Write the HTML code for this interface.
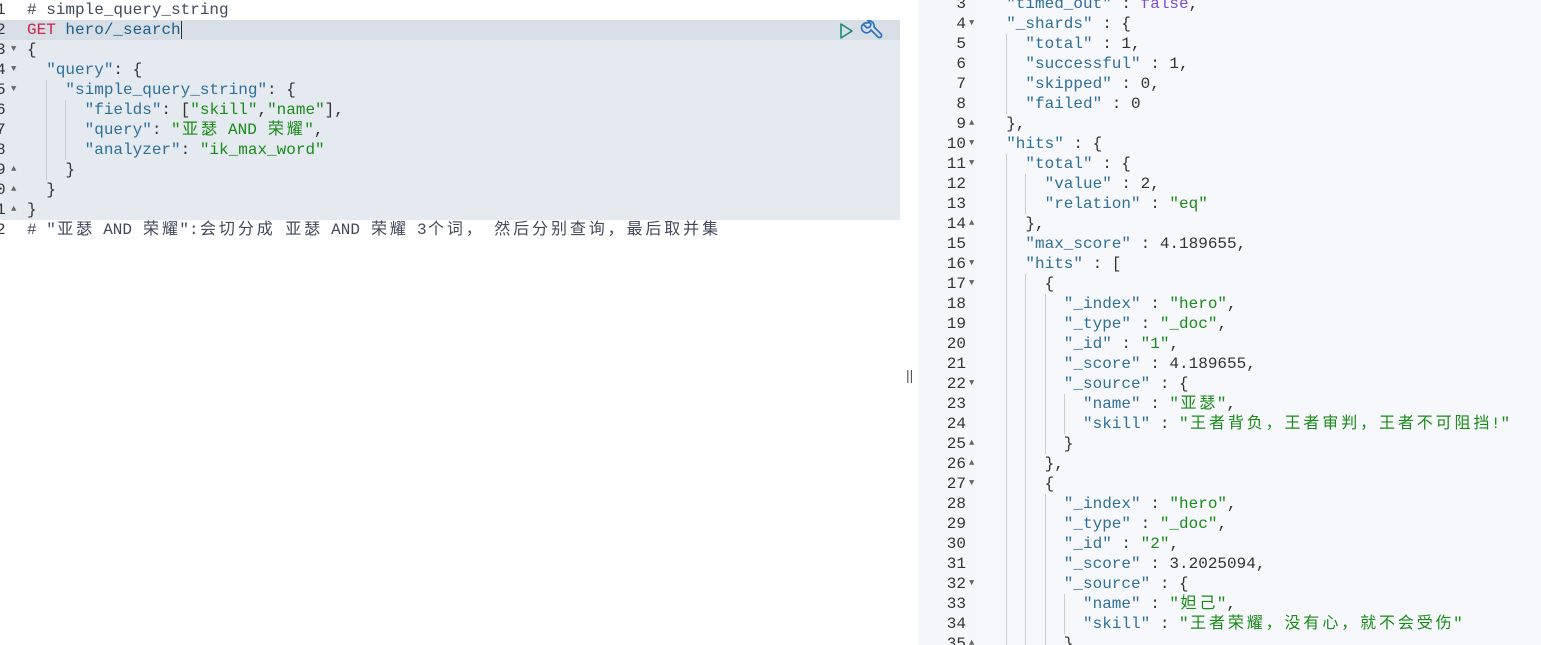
<!DOCTYPE html>
<html><head><meta charset="utf-8"><style>
html,body{margin:0;width:1541px;height:645px;overflow:hidden;}
body{background:#fff;position:relative;font-family:"Liberation Mono","Noto Sans CJK SC",monospace;font-size:16px;}
.l{position:absolute;white-space:pre;line-height:20px;height:20px;color:#333;}
.k{color:#2f6f98}.s{color:#1a8a1a}.c{color:#41495a}.m{color:#c7254e}.b{color:#7a4fd4}.n{color:#1c5e8a}
.g{position:absolute;width:1px;background:#c8ccd4;}
.num{position:absolute;line-height:20px;color:#333;font-size:16px;}
.ar{position:absolute;font-size:9px;color:#666;}
.cj{display:inline-block;width:18.9px;text-align:center;}
</style></head><body>
<div style="position:absolute;left:0;top:20px;width:900px;height:200px;background:#e5e9f0"></div>
<div style="position:absolute;left:0;top:20px;width:900px;height:20px;background:#d8dee6"></div>
<div style="position:absolute;left:918px;top:0;width:623px;height:645px;background:#f5f7fa"></div>
<div style="position:absolute;left:980px;top:0;width:561px;height:645px;background:#f7f8fb"></div>
<div style="position:absolute;left:906px;top:367px;font-family:'Liberation Sans';font-size:14px;color:#555">||</div>

<div class="num" style="left:-4px;top:0">1</div>
<div class="num" style="left:-4px;top:20px">2</div>
<div class="num" style="left:-4px;top:40px">3</div><div class="ar" style="left:11px;top:44px">▼</div>
<div class="num" style="left:-4px;top:60px">4</div><div class="ar" style="left:11px;top:64px">▼</div>
<div class="num" style="left:-4px;top:80px">5</div><div class="ar" style="left:11px;top:84px">▼</div>
<div class="num" style="left:-4px;top:100px">6</div>
<div class="num" style="left:-4px;top:120px">7</div>
<div class="num" style="left:-4px;top:140px">8</div>
<div class="num" style="left:-4px;top:160px">9</div><div class="ar" style="left:11px;top:164px">▲</div>
<div class="num" style="left:-4px;top:180px">0</div><div class="ar" style="left:11px;top:184px">▲</div>
<div class="num" style="left:-4px;top:200px">1</div><div class="ar" style="left:11px;top:204px">▲</div>
<div class="num" style="left:-4px;top:220px">2</div>

<div class="g" style="left:46px;top:80px;height:100px"></div>
<div class="g" style="left:65px;top:100px;height:60px"></div>
<div class="l c" style="left:27px;top:0"># simple_query_string</div>
<div class="l" style="left:27px;top:20px"><span class="m">GET</span> <span class="n">hero/_search</span><span style="border-left:1px solid #333"></span></div>
<div class="l" style="left:27px;top:40px">{</div>
<div class="l" style="left:27px;top:60px">  <span class="k">"query"</span>: {</div>
<div class="l" style="left:27px;top:80px">    <span class="k">"simple_query_string"</span>: {</div>
<div class="l" style="left:27px;top:100px">      <span class="k">"fields"</span>: [<span class="s">"skill"</span>,<span class="s">"name"</span>],</div>
<div class="l" style="left:27px;top:120px">      <span class="k">"query"</span>: <span class="s">"亚瑟 AND 荣耀"</span>,</div>
<div class="l" style="left:27px;top:140px">      <span class="k">"analyzer"</span>: <span class="s">"ik_max_word"</span></div>
<div class="l" style="left:27px;top:160px">    }</div>
<div class="l" style="left:27px;top:180px">  }</div>
<div class="l" style="left:27px;top:200px">}</div>
<div class="l c" style="left:27px;top:220px"># "亚瑟 AND 荣耀":会切分成 亚瑟 AND 荣耀 3个词， 然后分别查询，最后取并集</div>

<svg style="position:absolute;left:838px;top:20px" width="46" height="22" viewBox="0 0 46 22">
<path d="M3 4 L14 11 L3 18 Z" fill="none" stroke="#1a8a7a" stroke-width="1.6" stroke-linejoin="round"/>
<g fill="none" stroke="#2a6fc0" stroke-width="1.6" stroke-linecap="round">
<path d="M30 3 a5 5 0 1 0 3 7 l7 7 a2 2 0 0 0 3 -3 l-7 -7 a5 5 0 0 0 -6 -6 l3 3 -1 3 -3 1 -3 -3"/>
</g></svg>

<div id="r"></div>
<script>
const L=[
[3,2,'<span class="k">"timed_out"</span> : <span class="b">false</span>,'],
[4,2,'<span class="k">"_shards"</span> : {',1],
[5,4,'<span class="k">"total"</span> : 1,'],
[6,4,'<span class="k">"successful"</span> : 1,'],
[7,4,'<span class="k">"skipped"</span> : 0,'],
[8,4,'<span class="k">"failed"</span> : 0'],
[9,2,'},',2],
[10,2,'<span class="k">"hits"</span> : {',1],
[11,4,'<span class="k">"total"</span> : {',1],
[12,6,'<span class="k">"value"</span> : 2,'],
[13,6,'<span class="k">"relation"</span> : <span class="s">"eq"</span>'],
[14,4,'},',2],
[15,4,'<span class="k">"max_score"</span> : 4.189655,'],
[16,4,'<span class="k">"hits"</span> : [',1],
[17,6,'{',1],
[18,8,'<span class="k">"_index"</span> : <span class="s">"hero"</span>,'],
[19,8,'<span class="k">"_type"</span> : <span class="s">"_doc"</span>,'],
[20,8,'<span class="k">"_id"</span> : <span class="s">"1"</span>,'],
[21,8,'<span class="k">"_score"</span> : 4.189655,'],
[22,8,'<span class="k">"_source"</span> : {',1],
[23,10,'<span class="k">"name"</span> : <span class="s">"亚瑟"</span>,'],
[24,10,'<span class="k">"skill"</span> : <span class="s">"王者背负，王者审判，王者不可阻挡!"</span>'],
[25,8,'}',2],
[26,6,'},',2],
[27,6,'{',1],
[28,8,'<span class="k">"_index"</span> : <span class="s">"hero"</span>,'],
[29,8,'<span class="k">"_type"</span> : <span class="s">"_doc"</span>,'],
[30,8,'<span class="k">"_id"</span> : <span class="s">"2"</span>,'],
[31,8,'<span class="k">"_score"</span> : 3.2025094,'],
[32,8,'<span class="k">"_source"</span> : {',1],
[33,10,'<span class="k">"name"</span> : <span class="s">"妲己"</span>,'],
[34,10,'<span class="k">"skill"</span> : <span class="s">"王者荣耀，没有心，就不会受伤"</span>'],
[35,8,'}',2]];
const B=987,W=9.6;let h='';
const ty=n=>-6+(n-3)*20;
for(const [n,c,t,f] of L){
 h+=`<div class="num" style="left:930px;width:36px;text-align:right;top:${ty(n)}px">${n}</div>`;
 if(f) h+=`<div class="ar" style="left:969px;top:${ty(n)+4}px">${f==1?'▼':'▲'}</div>`;
 h+=`<div class="l" style="left:${B+c*W}px;top:${ty(n)}px">${t}</div>`;
}
const G=[[2,5,8],[2,11,36],[4,12,13],[4,17,36],[6,18,25],[6,28,36],[8,23,24],[8,33,34]];
for(const [c,a,b] of G){const t=ty(a);const hh=Math.min((b-a+1)*20,645-t);h+=`<div class="g" style="left:${Math.round(B+c*W)}px;top:${t}px;height:${hh}px"></div>`;}
document.getElementById('r').innerHTML=h;
function wrap(node){
 for(const ch of [...node.childNodes]){
  if(ch.nodeType===3){
   if(/[\u3000-\uffff]/.test(ch.nodeValue)){
    const s=document.createElement('span');
    s.innerHTML=ch.nodeValue.replace(/[&<>]/g,m=>({'&':'&amp;','<':'&lt;','>':'&gt;'}[m])).replace(/([\u3000-\uffff])/g,'<span class="cj">$1</span>');
    ch.replaceWith(...s.childNodes);
   }
  } else wrap(ch);
 }
}
document.querySelectorAll('.l').forEach(wrap);
</script>
</body></html>
